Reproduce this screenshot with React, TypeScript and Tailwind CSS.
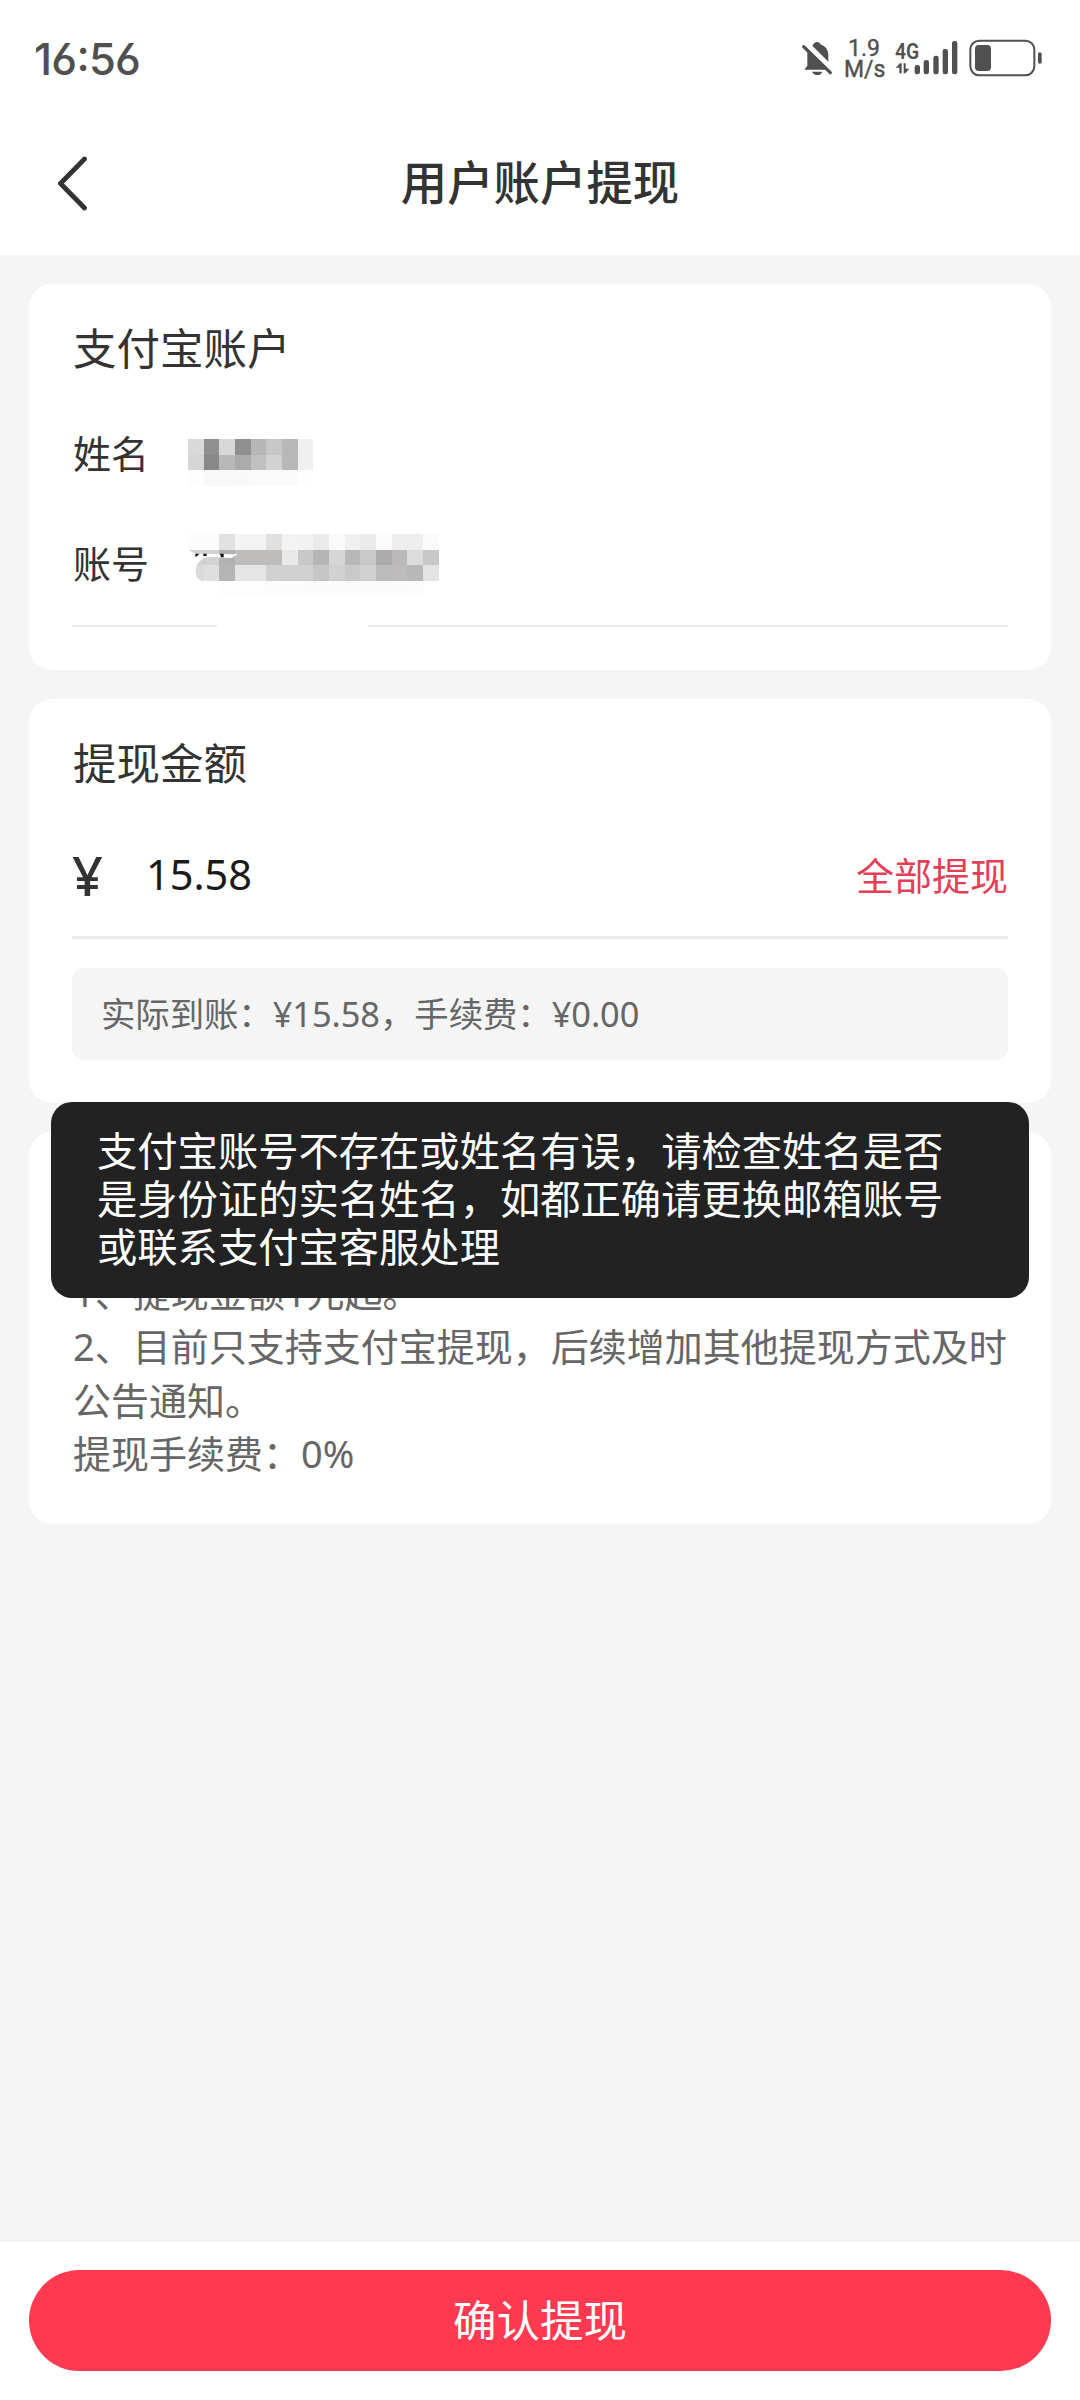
const NAME_CELLS = [
  ['#d9d9d9', '#8f8f8f', '#d8d8d8', '#8f8f8f', '#b7b7b7', '#c7c7c7', '#b8b8b8', '#f0f0f0'],
  ['#d5d5d5', '#888888', '#b8b8b8', '#ababab', '#c1c1c1', '#d2d2d2', '#b8b8b8', '#efefef'],
  ['#fdfdfd', '#f8f8f8', '#f8f8f8', '#f9f9f9', '#fafafa', '#fafafa', '#fafafa', '#fefefe'],
]

const ACCOUNT_CELLS = [
  ['#fcfcfc', '#fcfcfc', '#e1e1e1', '#f3f3f3', '#f3f3f3', '#e0e0e0', '#f3f3f3', '#f2f2f2', '#ebebeb', '#fafafa', '#f0f0f0', '#ebebeb', '#fcfcfc', '#eeeeee', '#eeeeee', '#fbfbfb'],
  ['#d2d2d2', '#d2d2d2', '#b2b2b2', '#bfbcbc', '#bfbcbc', '#bfbcbc', '#e9e9e9', '#c8c8c8', '#b5b5b5', '#d6d6d6', '#b8b8b8', '#c9c9c9', '#ababab', '#bbb8b8', '#dcdcdc', '#c8c8c8'],
  ['#dadada', '#dfdfdf', '#b5b5b5', '#e5e5e5', '#e5e5e5', '#d1d1d1', '#d0d0d0', '#d0d0d0', '#c6c6c6', '#d1d1d1', '#c9c9c9', '#d1d1d1', '#bbbbbb', '#bdbbbb', '#b8b8b8', '#e4e4e4'],
  ['#ffffff', '#ffffff', '#fdfdfd', '#fdfdfd', '#fdfdfd', '#fcfcfc', '#fcfcfc', '#fbfbfb', '#fbfbfb', '#fbfbfb', '#fbfbfb', '#fbfbfb', '#fbfbfb', '#fbfbfb', '#fcfcfc', '#ffffff'],
]

// censored value, drawn as a mosaic
function Mosaic({ cells, children }: { cells: string[][]; children?: React.ReactNode }) {
  const w = cells[0].length * 47
  const h = cells.length * 47
  return (
    <svg width={w / 3} height={h / 3} viewBox={`0 0 ${w} ${h}`} className="shrink-0">
      {cells.map((row, y) =>
        row.map((fill, x) => (
          <rect key={`${x}-${y}`} x={x * 47} y={y * 47} width="47" height="47" fill={fill} shapeRendering="crispEdges" />
        ))
      )}
      {children}
    </svg>
  )
}

function StatusBar() {
  return (
    <div className="h-[118px] pl-[34px] pr-[37px] flex items-center justify-between text-[#505050]">
      <span className="font-['Inter'] text-[43.5px] leading-[60px] font-medium tracking-[-0.7px] [font-feature-settings:'ss01','case']">16:56</span>
      <div className="flex items-center h-[60px]">
        <svg width="32" height="36" viewBox="0 0 96 108" fill="currentColor">
          <path d="M34 14 C38 8 42 3 48 3 C54 3 58 8 60 11 C74 14 82 28 82 42 V62 Z" />
          <path d="M20 30 L78 86 H10 L19 74 V44 C19 38 19 34 20 30 Z" />
          <path d="M33 92 H64 C62 99 55 102 49 102 C43 102 36 99 33 92 Z" />
          <path d="M8 17 L88 95" stroke="currentColor" strokeWidth="10" strokeLinecap="round" />
          <path d="M18 12 L94 86" stroke="#fff" strokeWidth="6" />
        </svg>
        <div className="ml-[11px] w-[40px] font-['Roboto'] text-[23px] leading-[21px] text-center whitespace-nowrap [-webkit-text-stroke:0.4px_#505050]">
          <div>1.9</div>
          <div>M/s</div>
        </div>
        <div className="ml-[11px] w-[64px] h-[38px] flex">
          <div className="w-[19px] flex flex-col">
            <span className="font-['Roboto'] font-semibold text-[22.5px] leading-[22px] origin-left scale-x-[0.86] whitespace-nowrap">4G</span>
            <svg width="17" height="14" viewBox="0 0 51 42" fill="currentColor">
              <path d="M2 17 L15 4 H20 V34 H13 V17 Z" />
              <path d="M26 4 H32 V20 H43 L31 34 H26 Z" />
            </svg>
          </div>
          <svg width="44" height="36" viewBox="0 0 132 108" fill="currentColor">
            <rect x="2" y="75" width="16" height="28" rx="7" />
            <rect x="29" y="60" width="16" height="43" rx="7" />
            <rect x="58" y="47" width="16" height="56" rx="7" />
            <rect x="86" y="27" width="16" height="76" rx="7" />
            <rect x="114" y="3" width="16" height="100" rx="7" />
          </svg>
        </div>
        <svg className="ml-[10px] mb-[2px]" width="74" height="38" viewBox="0 0 222 114">
          <rect x="4" y="5" width="192" height="104" rx="27" fill="none" stroke="#505050" strokeWidth="6" />
          <rect x="18" y="18" width="48" height="78" rx="11" fill="#505050" />
          <rect x="207" y="40" width="11" height="34" rx="5" fill="#505050" />
        </svg>
      </div>
    </div>
  )
}

function NavBar() {
  return (
    <div className="h-[129px] px-[56px] flex items-center text-[#333]">
      <svg width="34" height="56" viewBox="0 0 34 56" fill="none" stroke="currentColor" strokeWidth="4.8" strokeLinecap="round" strokeLinejoin="round">
        <path d="M28.5 4 L4.5 28.5 L28.5 53" />
      </svg>
      <h1 className="flex-1 text-center text-[46.4px] leading-[60px] font-medium pb-[2px]">用户账户提现</h1>
      <div className="w-[34px]" />
    </div>
  )
}

export default function App() {
  return (
    <div className="relative w-[1080px] h-[2400px] flex flex-col bg-white font-['Noto_Sans','Noto_Sans_CJK_SC',sans-serif] text-[38px] text-[#333]">
      <header className="h-[255px] shrink-0">
        <StatusBar />
        <NavBar />
      </header>

      <main className="flex-1 bg-[#f5f5f5] px-[29px] pt-[29px] space-y-[29px]">
        <section className="h-[386px] rounded-[23px] bg-white px-[43px] pt-[34px]">
          <h2 className="pl-px text-[43.5px] leading-[61px]">支付宝账户</h2>
          <div className="h-[110px] mt-[21px] flex items-center">
            <span className="w-[116px] pl-px pb-[4px]">姓名</span>
            <div className="pt-[14px]">
              <Mosaic cells={NAME_CELLS} />
            </div>
          </div>
          <div className="h-[110px] flex items-center">
            <span className="w-[116px] pl-px pb-[4px]">账号</span>
            <Mosaic cells={ACCOUNT_CELLS}>
              <path d="M0 46 L20 59 L150 61 L130 72 L105 71 L75 68 L45 72 L27 91 L22 111 L27 131 L40 141 H0 Z" fill="#fff" />
              <path d="M22 59 h12 l-9 9 h-3 z M46 59 h10 v7 h-10 z M96 59 h11 v11 h-8 z" fill="#111" />
            </Mosaic>
          </div>
          <div className="flex justify-between mt-[5px]">
            <div className="w-[145px] h-[2px] bg-[#ebebeb]" />
            <div className="w-[640px] h-[2px] bg-[#ebebeb]" />
          </div>
        </section>

        <section className="h-[404px] rounded-[23px] bg-white px-[43px] pt-[34px]">
          <h2 className="pl-px text-[43.5px] leading-[61px]">提现金额</h2>
          <div className="h-[145px] flex items-center border-b-3 border-[#ebebeb] pb-[4px] pt-[24px]">
            <span className="w-[74px] text-[54px] leading-[60px] font-medium">¥</span>
            <span className="flex-1 text-[41.5px] leading-[60px] text-[#1a1a1a] pb-[2px]">15.58</span>
            <span className="text-[#e34057] leading-[60px]">全部提现</span>
          </div>
          <div className="mt-[29px] h-[92px] rounded-[12px] bg-[#f5f5f5] px-[29px] flex items-center text-[34.4px] tracking-[-0.05px] text-[#666]">
            实际到账：¥15.58，手续费：¥0.00
          </div>
        </section>

        <section className="h-[392px] rounded-[23px] bg-white pl-[44px] pt-[134px] text-[#666] leading-[53.8px] whitespace-nowrap">
          <p>1、提现金额1元起。</p>
          <p>2、目前只支持支付宝提现，后续增加其他提现方式及时</p>
          <p>公告通知。</p>
          <p>提现手续费：0%</p>
        </section>
      </main>

      <footer className="h-[158px] shrink-0 bg-white px-[29px] pt-[28px]">
        <button className="w-full h-[101px] rounded-full bg-[#ff3a50] text-white text-[43.5px] leading-[60px] pb-[2px]">确认提现</button>
      </footer>

      {/* toast */}
      <div className="absolute left-[51px] top-[1102px] w-[978px] h-[196px] rounded-[21px] bg-[#222] pl-[46px] pt-[25px] text-white text-[40.3px] leading-[48px] whitespace-nowrap">
        <p>支付宝账号不存在或姓名有误，请检查姓名是否</p>
        <p>是身份证的实名姓名，如都正确请更换邮箱账号</p>
        <p>或联系支付宝客服处理</p>
      </div>
    </div>
  )
}
